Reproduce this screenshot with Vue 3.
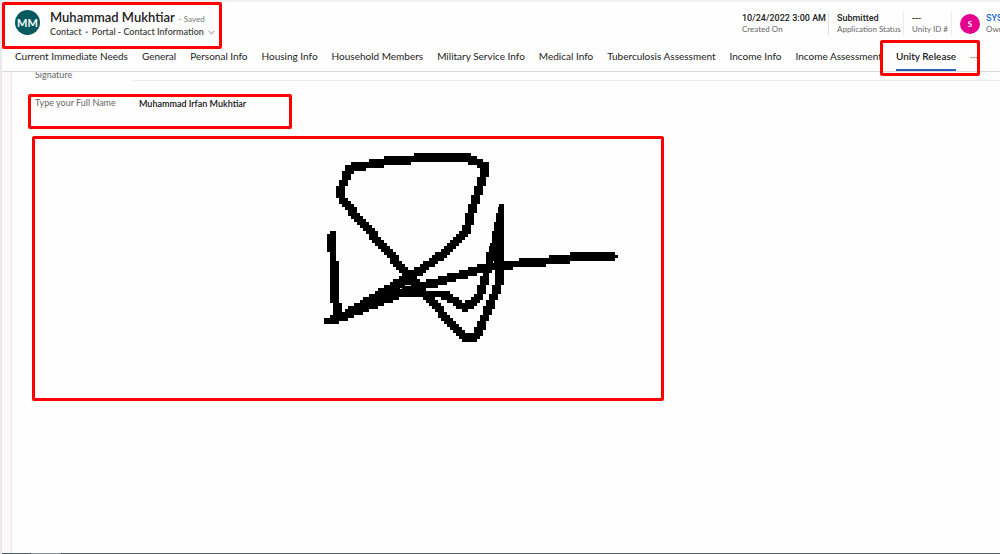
<script setup>
import { ref } from 'vue'

const tabs = [
  'Current Immediate Needs', 'General', 'Personal Info', 'Housing Info',
  'Household Members', 'Military Service Info', 'Medical Info',
  'Tuberculosis Assessment', 'Income Info', 'Income Assessment', 'Unity Release',
]
const active = ref('Unity Release')
const fullName = ref('Muhammad Irfan Mukhtiar')

const strokes = [
  [332, 235, 335, 297, 338, 316],
  [329, 321, 340, 318, 400, 282, 412, 276, 446, 252, 466, 231, 473, 207, 485, 171, 485, 166, 465, 157, 434, 157, 390, 161, 350, 168, 339, 194, 345, 203, 408, 275, 465, 339, 476, 337, 486, 315, 499, 283, 500, 235],
  [493, 248, 482, 290, 475, 302, 464, 307, 443, 294, 400, 294, 340, 318],
  [400, 291, 423, 286, 485, 268, 505, 265, 540, 262, 585, 256, 613, 256],
  [350, 312, 400, 287, 415, 288],
]
const cell = 3
const reach = 4.3

function inkPath(lines) {
  const cells = new Set()
  for (const line of lines) {
    for (let i = 0; i + 3 < line.length; i += 2) {
      const [x1, y1, x2, y2] = line.slice(i, i + 4)
      const steps = Math.ceil(Math.hypot(x2 - x1, y2 - y1))
      for (let s = 0; s <= steps; s++) {
        const x = x1 + (x2 - x1) * s / steps
        const y = y1 + (y2 - y1) * s / steps
        const cx = Math.floor(x / cell)
        const cy = Math.floor(y / cell)
        for (let a = cx - 2; a <= cx + 2; a++) {
          for (let b = cy - 2; b <= cy + 2; b++) {
            if (Math.hypot((a + 0.5) * cell - x, (b + 0.5) * cell - y) <= reach) cells.add(`M${a * cell} ${b * cell}h3v3h-3z`)
          }
        }
      }
    }
  }
  return [...cells].join('')
}
const ink = inkPath(strokes)
</script>

<template>
  <div class="app">
    <header class="record">
      <div class="top">
        <div class="identity">
          <span class="avatar">MM</span>
          <div class="titles">
            <div class="title"><h1>Muhammad Mukhtiar</h1><span class="saved">- Saved</span></div>
            <div class="sub">
              <span>Contact</span><span class="dot">·</span>
              <button type="button" class="form-switch">
                Portal - Contact Information
                <svg width="7" height="5" viewBox="0 0 7 5"><path d="M.5 .8 3.5 4 6.5 .8" fill="none" stroke="#777" stroke-width=".8" /></svg>
              </button>
            </div>
          </div>
        </div>
        <div class="facts">
          <div class="fact created"><strong>10/24/2022 3:00 AM</strong><span>Created On</span></div>
          <div class="fact status"><strong>Submitted</strong><span>Application Status</span></div>
          <div class="fact unity"><strong>---</strong><span>Unity ID #</span></div>
          <div class="owner">
            <span class="avatar pink">S</span>
            <div class="fact owner-text"><a href="#">SYS</a><span>Own</span></div>
          </div>
        </div>
      </div>
      <nav class="tabs">
        <button
          v-for="tab in tabs" :key="tab" type="button"
          :class="['tab', { active: tab === active }]" @click="active = tab"
        ><span>{{ tab }}</span></button>
        <button type="button" class="tab more" aria-label="More tabs">···</button>
      </nav>
    </header>

    <main class="body">
      <section class="panel">
        <div class="row cut"><span class="label">Signature</span><span class="line"></span></div>
        <div class="row name marked">
          <label class="label" for="full-name">Type your Full Name</label>
          <input id="full-name" v-model="fullName" type="text" />
        </div>
        <div class="signature marked">
          <svg viewBox="35 139 626 259" role="img" aria-label="Signature">
            <path :d="ink" />
            <path d="M499 207V204H504V264H488V252H490V243H492V231H494V222H496V213H498V207Z" />
            <path d="M405 285h6v1h-6zM400 288h2v1h-2zM493 261h1v2h-1z" fill="#ddd" />
          </svg>
        </div>
      </section>
    </main>
    <footer class="edge"><i></i></footer>
  </div>
</template>

<style>
body { margin: 0; }
</style>

<style scoped>
.app {
  display: flex; flex-direction: column; min-height: 100vh; box-sizing: border-box;
  border-left: 2px solid #e9e8ed; overflow: hidden;
  font-family: Lato, "Open Sans", sans-serif; background: #fefefe; color: #222;
}
button { font: inherit; color: inherit; background: none; border: 0; padding: 0; }
.record { border-top: 2px solid #f0eff2; border-bottom: 1px solid #d9d9dc; background: #fefefe; }
.top { display: flex; justify-content: space-between; height: 42px; }
.identity {
  display: flex; align-items: flex-start; width: 214px; height: 41px;
  border: 3px solid #f00; border-radius: 2px;
}
.avatar {
  display: flex; align-items: center; justify-content: center; flex: none;
  width: 25px; height: 25px; margin: 5px 0 0 10px; border-radius: 50%;
  background: #065a5f; color: #fff; font-size: 11px; font-weight: 700;
}
.titles { margin-left: 10px; white-space: nowrap; }
.title { display: flex; align-items: baseline; gap: 4px; height: 20px; line-height: 24px; }
h1 { margin: 0; font-size: 13px; line-height: 24px; font-weight: 600; }
.saved { font-size: 8px; color: #777; }
.sub { display: flex; gap: 4px; height: 14px; line-height: 14px; font-size: 9px; font-weight: 600; color: #444; }
.form-switch { display: flex; align-items: center; gap: 4px; }
.facts { display: flex; padding-top: 9px; white-space: nowrap; }
.fact { display: flex; flex-direction: column; box-sizing: border-box; height: 24px; font-size: 8px; line-height: 11px; color: #666; }
.fact strong { font: 500 9px/14px Roboto, sans-serif; height: 13px; color: #222; }
.created { width: 87px; border-right: 1px solid #ddd; }
.status { width: 75px; padding-left: 8px; border-right: 1px solid #ececec; }
.unity { width: 48px; padding-left: 8px; border-right: 1px solid #ececec; }
.owner { display: flex; width: 48px; }
.pink { width: 20px; height: 20px; margin: 3px 0 0 8px; background: #e3008c; font-size: 8px; }
.owner-text { margin-left: 6px; }
.owner a { color: #2266cc; text-decoration: none; font: 500 9px/14px Roboto, sans-serif; height: 13px; }
.tabs { display: flex; gap: 14px; height: 27px; padding-left: 13px; white-space: nowrap; font-size: 10px; }
.tab { position: relative; display: flex; height: 27px; line-height: 25px; }
.tab.active { font-weight: 600; border-bottom: 2px solid #2b5fb3; box-sizing: border-box; }
.tab.active::after {
  content: ""; position: absolute; inset: -4px -24px -7px -16px;
  border: 3px solid #f00; border-radius: 2px; z-index: 2;
}
.more { color: #777; }
.body { display: flex; flex: 1; padding-left: 9px; background: #faf9f8; }
.panel { flex: 1; border-left: 1px solid #e8e8ec; background: #fefefe; }
.row { display: flex; font-size: 9px; color: #666; }
.label { width: 104px; line-height: 12px; flex: none; }
.cut { height: 22px; padding-left: 23px; overflow: hidden; }
.cut .label { margin-top: -3px; }
.line { flex: 1; height: 8px; border-bottom: 1px solid #ececee; margin-left: -6px; }
.marked { border: 3px solid #f00; border-radius: 2px; box-sizing: border-box; }
.name { width: 264px; height: 35px; margin-left: 16px; padding-left: 4px; }
.name input {
  width: 140px; height: 12px; padding: 0; border: 0; outline: 0; background: none;
  font: 600 9px Lato, "Open Sans", sans-serif; color: #111;
}
.signature { width: 632px; max-width: 97%; margin: 7px 0 0 20px; }
.signature svg { display: block; width: 100%; }
.edge { height: 1px; background: #505a62; }
.edge i { display: block; width: 30px; height: 1px; margin-left: 29px; background: #8a949a; }
</style>
